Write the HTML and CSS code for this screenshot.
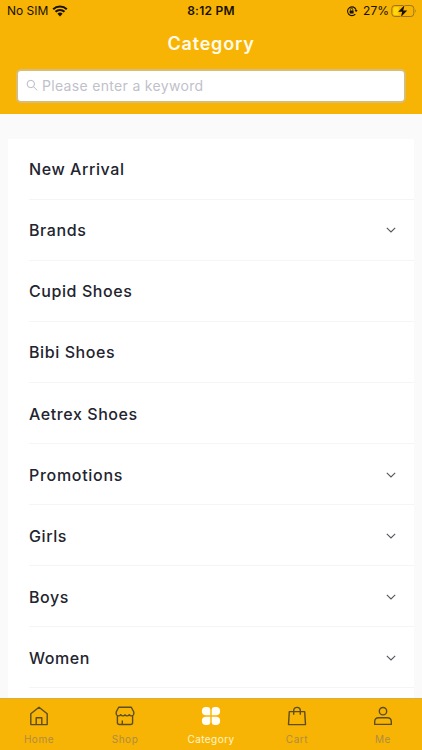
FILE: index.html
```
<!DOCTYPE html>
<html lang="en">
<head>
<meta charset="utf-8">
<title>Category</title>
<link rel="stylesheet" href="styles.css">
</head>
<body>
<div class="app">
  <header class="header">
    <div class="status">
      <div class="status-left">
        <span class="carrier">No SIM</span>
        <svg class="wifi" width="16" height="12" viewBox="0 0 16 12"><path d="M1.2 4.3a9.7 9.7 0 0 1 13.6 0M3.5 6.8a6.4 6.4 0 0 1 9 0" fill="none" stroke="#171100" stroke-width="2"/><path d="M5.4 8.7a3.8 3.8 0 0 1 5.2 0L8 11.4z" fill="#171100"/></svg>
      </div>
      <span class="time">8:12 PM</span>
      <div class="status-right">
        <svg class="lock" width="12" height="12" viewBox="0 0 12 12"><path d="M9.3 9.1A4.4 4.4 0 1 1 10.1 4.8" fill="none" stroke="#171100" stroke-width="1.1"/><path d="M8.6 5.1h3L10.1 7.3z" fill="#171100"/><rect x="3.6" y="5.4" width="4" height="3" rx=".5" fill="#171100"/><path d="M4.4 5.6V4.5a1.2 1.2 0 0 1 2.4 0v1.1" fill="none" stroke="#171100" stroke-width=".8"/></svg>
        <span class="percent">27%</span>
        <svg class="battery" width="26" height="14" viewBox="0 0 26 14"><rect x=".8" y="1.5" width="22" height="11" rx="3" fill="none" stroke="#9a751b"/><path d="M3.8 3h3.8v8H3.8a1.5 1.5 0 0 1-1.5-1.5v-5A1.5 1.5 0 0 1 3.8 3z" fill="#ffd90a"/><path d="M24.2 5.2q1.5 1.8 0 3.6z" fill="#9a751b"/><path d="M13.5 1.2 7.2 7.8h4l-1.3 5.2 6.3-6.6h-4z" fill="#171100" stroke="#f7b306" stroke-width="1.2" paint-order="stroke"/></svg>
      </div>
    </div>
    <h1 class="title">Category</h1>
    <div class="search">
      <svg width="13" height="13" viewBox="0 0 13 13" fill="none" stroke="#b9bbc4"><circle cx="4.8" cy="5" r="3.7"/><path d="m7.500 7.700 3.600 3.600"/></svg>
      <span class="placeholder">Please enter a keyword</span>
    </div>
  </header>
  <main class="content">
    <ul class="list">
      <li class="row"><span>New Arrival</span></li>
      <li class="row"><span>Brands</span><svg class="chevron" viewBox="0 0 10 6"><path d="m.8.800 4.200 4.200L9.200.8"/></svg></li>
      <li class="row"><span>Cupid Shoes</span></li>
      <li class="row"><span>Bibi Shoes</span></li>
      <li class="row"><span>Aetrex Shoes</span></li>
      <li class="row wide"><span>Promotions</span><svg class="chevron" viewBox="0 0 10 6"><path d="m.8.800 4.200 4.200L9.200.8"/></svg></li>
      <li class="row"><span>Girls</span><svg class="chevron" viewBox="0 0 10 6"><path d="m.8.800 4.200 4.200L9.200.8"/></svg></li>
      <li class="row"><span>Boys</span><svg class="chevron" viewBox="0 0 10 6"><path d="m.8.800 4.200 4.200L9.200.8"/></svg></li>
      <li class="row"><span>Women</span><svg class="chevron" viewBox="0 0 10 6"><path d="m.8.800 4.200 4.200L9.200.8"/></svg></li>
    </ul>
  </main>
  <nav class="tabs">
    <a class="tab"><svg class="icon" viewBox="0 0 20 20"><path d="M1.800 7.700 10 1.300l8.200 6.400v10.900H1.800zM7.200 18.400v-6.700h5.600v6.700"/></svg><span>Home</span></a>
    <a class="tab"><svg class="icon" viewBox="0 0 20 20"><path d="M3.700 1.200h12.600L18.800 6v2q-.3 1.900-2.200 1.900-1.600 0-2.300-1.200-.8 1.200-2.200 1.200T10 8.800Q9.300 9.900 7.900 9.900T5.700 8.700Q5 9.900 3.400 9.900 1.500 9.900 1.200 8V6zM2.400 9.700v6.800q0 2 2 2h11.200q2 0 2-2V9.700M7.300 18.300v-3.800"/></svg><span>Shop</span></a>
    <a class="tab active"><svg class="icon" viewBox="0 0 20 20"><path d="M9.300 9.300H4.900a4 4 0 0 1-4-4V4.900a4 4 0 0 1 4-4h1.400a3 3 0 0 1 3 3zM10.700 9.300V3.900a3 3 0 0 1 3-3h1.400a4 4 0 0 1 4 4v.4a4 4 0 0 1-4 4zM9.300 10.700v5.400a3 3 0 0 1-3 3H4.900a4 4 0 0 1-4-4v-.4a4 4 0 0 1 4-4zM10.700 10.700h4.400a4 4 0 0 1 4 4v.4a4 4 0 0 1-4 4h-1.400a3 3 0 0 1-3-3z"/></svg><span>Category</span></a>
    <a class="tab"><svg class="icon" viewBox="0 0 20 20"><path d="M2.300 5.600h15.400l.8 13H1.500zM6.700 8.800V4.700a3.300 3.300 0 0 1 6.600 0v4.100"/></svg><span>Cart</span></a>
    <a class="tab"><svg class="icon" viewBox="0 0 20 20"><circle cx="10" cy="5.200" r="3.700"/><path d="M1.700 18.400v-2.600q0-4 4-4h8.600q4 0 4 4v2.600z"/></svg><span>Me</span></a>
  </nav>
</div>
</body>
</html>
```
FILE: styles.css
```
* { box-sizing: border-box; }
body { margin: 0; font-family: Inter, sans-serif; background: #fafafa; }
.app { width: 422px; height: 750px; display: flex; flex-direction: column; overflow: hidden; }
.header { height: 114px; flex: none; background: #f8b405; }
.status { height: 22px; display: grid; grid-template-columns: 1fr auto 1fr; align-items: center; padding: 0 5px 0 7px; color: #171100; font-size: 12px; line-height: 22px; }
.status-left, .status-right { display: flex; align-items: center; }
.status-left { gap: 5px; }
.status-right { justify-content: flex-end; }
.carrier { letter-spacing: 0; }
.wifi { margin-left: -1px; }
.time { font-weight: 600; letter-spacing: .25px; margin-left: -2px; }
.lock { margin-right: 5px; }
.percent { margin-right: 2px; }
.title { margin: 8px 0 0; height: 27px; line-height: 27px; text-align: center; font-size: 18px; font-weight: 600; letter-spacing: .8px; color: #fffbea; }
.search { margin: 12px 16px 0; height: 34px; border: 2px solid #d8bd79; border-radius: 5px; background: #fff; display: flex; align-items: center; padding-left: 8px; gap: 3px; }
.placeholder { font-size: 14px; letter-spacing: .32px; color: #bfc1ca; position: relative; top: -1px; }
.search svg { position: relative; top: -.5px; }
.content { flex: 1; min-height: 0; overflow: hidden; padding: 24.600px 8px 0; }
.list { margin: 0; padding: 0 0 0 21px; list-style: none; background: #fff; height: 600px; }
.row { height: 61.1px; border-bottom: 1px solid #f5f5f6; display: flex; align-items: center; justify-content: space-between; padding: 1px 18px 0 0; font-size: 16px; font-weight: 500; letter-spacing: .58px; color: #22242e; }
.wide { letter-spacing: .7px; }
.chevron { width: 10px; height: 6px; fill: none; stroke: #55565d; stroke-width: 1.1; }
.tabs { height: 52px; flex: none; background: #f8b405; border-top: 1px solid #d8ad42; display: grid; grid-template-columns: repeat(5, 86px); margin: 0 -4px; }
.tab { display: flex; flex-direction: column; align-items: center; padding-top: 7px; font-size: 10px; line-height: 14px; letter-spacing: .55px; color: #ae8c42; }
.tab span { margin-top: 6px; }
.icon { width: 20px; height: 20px; fill: none; stroke: #5b4d21; stroke-width: 1.4; stroke-linejoin: round; }
.active { color: #fff4cf; letter-spacing: .45px; }
.active .icon { fill: #fffdf4; stroke: none; }
```
